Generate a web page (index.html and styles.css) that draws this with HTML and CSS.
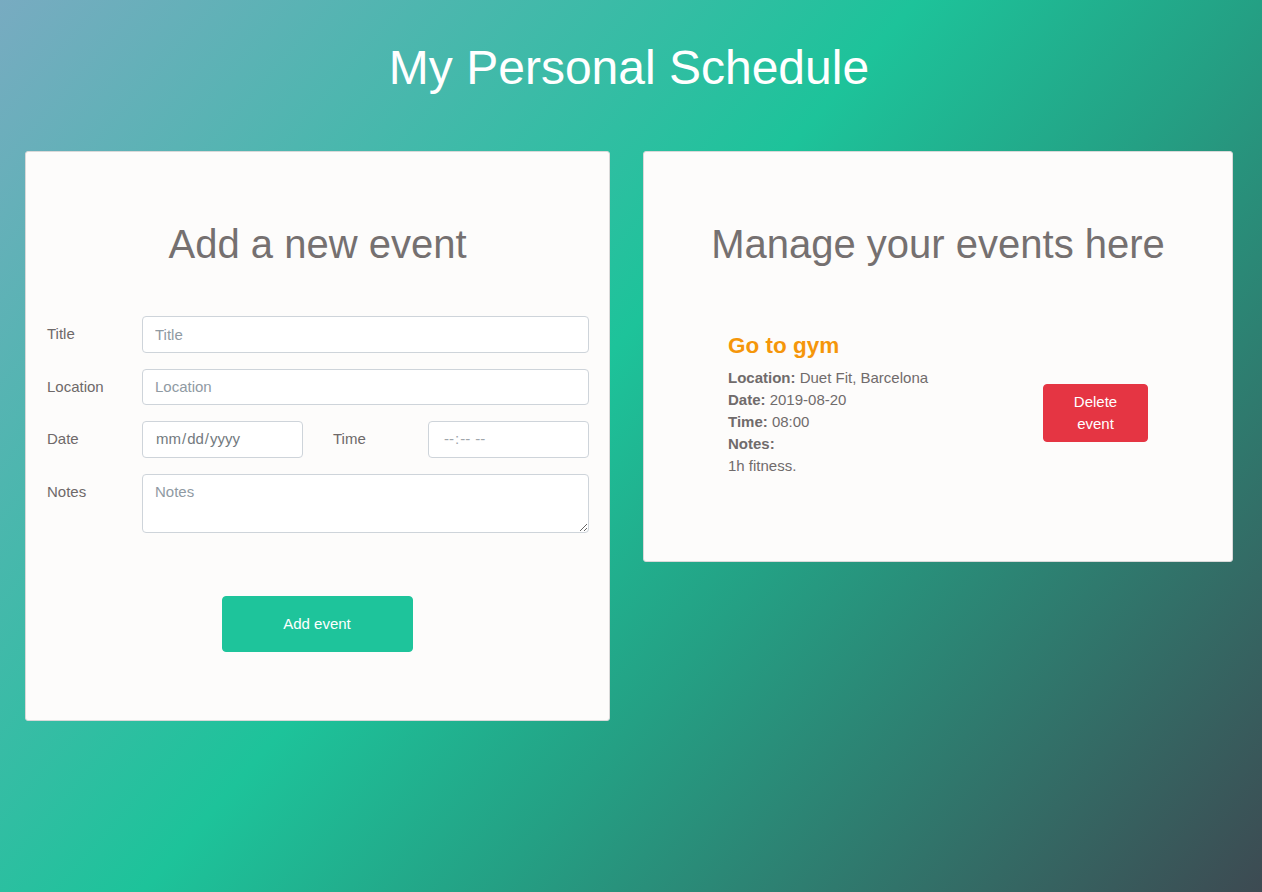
FILE: index.html
```html
<!DOCTYPE html>
<html lang="en">
<head>
<meta charset="utf-8">
<title>My Personal Schedule</title>
<link rel="stylesheet" href="styles.css">
</head>
<body>
<header class="page-header">
  <h1 class="page-title">My Personal Schedule</h1>
</header>
<main class="board">
  <section class="card card-add">
    <h2 class="card-title">Add a new event</h2>
    <form class="event-form">
      <div class="form-row">
        <label class="form-label" for="title">Title</label>
        <input class="form-control" id="title" type="text" placeholder="Title">
      </div>
      <div class="form-row">
        <label class="form-label" for="location">Location</label>
        <input class="form-control" id="location" type="text" placeholder="Location">
      </div>
      <div class="form-row">
        <label class="form-label" for="date">Date</label>
        <input class="form-control control-half control-date" id="date" type="date">
        <label class="form-label label-time" for="time">Time</label>
        <input class="form-control control-half control-time" id="time" type="time">
      </div>
      <div class="form-row">
        <label class="form-label" for="notes">Notes</label>
        <textarea class="form-control control-notes" id="notes" rows="2" placeholder="Notes"></textarea>
      </div>
      <div class="form-actions">
        <button class="btn btn-add" type="button">Add event</button>
      </div>
    </form>
  </section>
  <section class="card card-list">
    <h2 class="card-title">Manage your events here</h2>
    <ul class="event-list">
      <li class="event-item">
        <div class="event-info">
          <h3 class="event-name">Go to gym</h3>
          <p class="event-detail"><strong>Location:</strong> Duet Fit, Barcelona</p>
          <p class="event-detail"><strong>Date:</strong> 2019-08-20</p>
          <p class="event-detail"><strong>Time:</strong> 08:00</p>
          <p class="event-detail"><strong>Notes:</strong><br>1h fitness.</p>
        </div>
        <button class="btn btn-delete" type="button">Delete event</button>
      </li>
    </ul>
  </section>
</main>
</body>
</html>
```
FILE: styles.css
```css
* {
  box-sizing: border-box;
}

html {
  height: 100%;
}

body {
  margin: 0;
  min-height: 892px;
  font-family: "Liberation Sans", Arial, sans-serif;
  font-size: 15px;
  color: #6f6a6a;
  background: linear-gradient(131deg, #78abc1 0%, #1dc39a 45%, #24a084 62%, #3d4a52 100%);
}

.page-header {
  padding: 39px 4px 0 0;
  margin-bottom: 55px;
}

.page-title {
  margin: 0;
  font-size: 48px;
  font-weight: 400;
  line-height: 57px;
  text-align: center;
  color: #ffffff;
}

.board {
  display: grid;
  grid-template-columns: 585px 590px;
  column-gap: 33px;
  align-items: start;
  padding: 0 30px 0 25px;
}

.card {
  background: #fdfcfb;
  border: 1px solid #d9d9d9;
  border-radius: 3px;
}

.card-title {
  margin: 68px 0 0;
  font-size: 40px;
  font-weight: 400;
  line-height: 48px;
  text-align: center;
  color: #757070;
}

/* form card */
.card-add {
  padding-bottom: 68px;
}

.event-form {
  margin-top: 48px;
  padding: 0 20px 0 21px;
}

.form-row {
  display: flex;
  align-items: flex-start;
  margin-bottom: 16px;
}

.form-label {
  flex: 0 0 95px;
  padding: 7px 0;
  font-size: 15px;
  line-height: 22.5px;
  color: #6e6969;
}

.label-time {
  margin-left: 30px;
}

.form-control {
  flex: 1 1 auto;
  min-width: 0;
  height: 36.5px;
  padding: 6px 12px;
  font-family: "Liberation Sans", Arial, sans-serif;
  font-size: 15px;
  line-height: 22.5px;
  color: #495057;
  background: #ffffff;
  border: 1px solid #ced4da;
  border-radius: 4px;
}

.form-control::placeholder {
  color: #8f9aa3;
}

.control-half {
  flex: 0 0 161px;
  width: 161px;
}

.control-date::-webkit-datetime-edit {
  color: #737a80;
}

.control-time::-webkit-datetime-edit {
  color: #a0a6ab;
  padding-left: 2px;
}

.control-date::-webkit-calendar-picker-indicator,
.control-time::-webkit-calendar-picker-indicator {
  display: none;
}

.control-notes {
  height: 59px;
  resize: vertical;
}

.form-actions {
  display: flex;
  justify-content: center;
  padding: 47px 2px 0 0;
}

.btn {
  font-family: "Liberation Sans", Arial, sans-serif;
  font-size: 15px;
  color: #ffffff;
  border: 1px solid transparent;
  border-radius: 4px;
  cursor: pointer;
}

.btn-add {
  width: 191px;
  height: 56px;
  background: #1ec49b;
  border-color: #1ec49b;
}

/* events card */
.card-list {
  padding-bottom: 84px;
}

.event-list {
  list-style: none;
  margin: 64px 0 0;
  padding: 0 84px 0 84px;
}

.event-item {
  display: flex;
  justify-content: space-between;
  align-items: flex-start;
}

.event-name {
  margin: 0 0 8px;
  font-size: 22.5px;
  font-weight: 700;
  line-height: 27px;
  color: #f5960a;
}

.event-detail {
  margin: 0;
  font-size: 15px;
  line-height: 22px;
  color: #706b6b;
}

.event-detail strong {
  font-weight: 700;
}

.btn-delete {
  width: 105px;
  margin-top: 52px;
  padding: 6px 12px;
  line-height: 22px;
  background: #e53543;
  border-color: #e53543;
}
```
